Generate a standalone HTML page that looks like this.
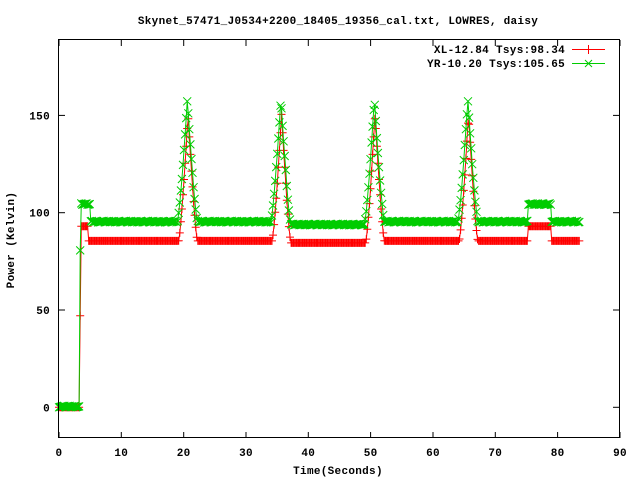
<!DOCTYPE html>
<html><head><meta charset="utf-8"><style>
html,body{margin:0;padding:0;background:#fff;}
svg{display:block;}
text{font-family:"Liberation Mono",monospace;font-weight:bold;font-size:11px;fill:#000;letter-spacing:0.3px;}
</style></head><body>
<svg id="s" width="640" height="480" xmlns="http://www.w3.org/2000/svg">
<text x="338" y="24" text-anchor="middle">Skynet_57471_J0534+2200_18405_19356_cal.txt, LOWRES, daisy</text>
<text x="338" y="474" text-anchor="middle">Time(Seconds)</text>
<text transform="translate(14,240) rotate(-90)" text-anchor="middle">Power (Kelvin)</text>
<g id="ax"></g>
<g id="data"></g>
<rect x="58.5" y="39.5" width="561" height="398" fill="none" stroke="#000" stroke-width="1"/>
<text x="565" y="53" text-anchor="end">XL-12.84 Tsys:98.34</text>
<text x="565" y="67" text-anchor="end">YR-10.20 Tsys:105.65</text>
<line x1="572" y1="49.5" x2="605" y2="49.5" stroke="#f00"/>
<line x1="588.5" y1="45" x2="588.5" y2="54" stroke="#f00"/>
<line x1="572" y1="63.5" x2="605" y2="63.5" stroke="#0c0"/>
<path d="M585 60 l7 7 M585 67 l7 -7" stroke="#0c0"/>
</svg>
<script>
function X(t){return 59+t*6.233;}
function Y(v){return 407.3-v*1.946;}
var ax=document.getElementById('ax'),h='';
[0,50,100,150].forEach(function(v){var y=Y(v).toFixed(1);
 h+='<line x1="59" y1="'+y+'" x2="65" y2="'+y+'" stroke="#000"/><line x1="613" y1="'+y+'" x2="619" y2="'+y+'" stroke="#000"/>';
 h+='<text x="50" y="'+(+y+4)+'" text-anchor="end">'+v+'</text>';});
for(var t=0;t<=90;t+=10){var x=X(t).toFixed(1);
 h+='<line x1="'+x+'" y1="438" x2="'+x+'" y2="432" stroke="#000"/><line x1="'+x+'" y1="40" x2="'+x+'" y2="46" stroke="#000"/>';
 h+='<text x="'+x+'" y="456" text-anchor="middle">'+t+'</text>';}
ax.innerHTML=h;
var peaks=[20.6,35.6,50.6,65.6];
function bump(t,p,a,w){var d=Math.abs(t-p)/w;if(d>=1)return 0;return a*Math.pow(1-d,1.3);}
function red(t){if(t<3.3)return 0;if(t<3.5)return 47;var b;
 if(t<4.7)b=93;else if(t>=75.2&&t<79)b=93;else if(t>36.5&&t<50)b=84.5;else b=85.5;
 peaks.forEach(function(p){b+=bump(t,p+0.1,65,1.5);});return b;}
function grn(t){if(t<3.3)return 0;if(t<3.5)return 80;var b;
 if(t<5)b=104;else if(t>=75.2&&t<79)b=104;else if(t>36.5&&t<50)b=93.5;else b=95;
 peaks.forEach(function(p){b+=bump(t,p,63,1.6);});return b;}
var pr='',pg='',mr='',mg='';
for(var t=0;t<=83.5;t+=0.17){var x=X(t),yr=Y(red(t)),yg=Y(grn(t)+((t*7)%1)*0.8);
 pr+=(pr?'L':'M')+x.toFixed(1)+' '+yr.toFixed(1);
 pg+=(pg?'L':'M')+x.toFixed(1)+' '+yg.toFixed(1);
 mr+='M'+(x-4).toFixed(1)+' '+yr.toFixed(1)+'h8M'+x.toFixed(1)+' '+(yr-4).toFixed(1)+'v8';
 mg+='M'+(x-4).toFixed(1)+' '+(yg-4).toFixed(1)+'l8 8M'+(x-4).toFixed(1)+' '+(yg+4).toFixed(1)+'l8 -8';}
document.getElementById('data').innerHTML=
 '<path d="'+pr+'" fill="none" stroke="#f00"/><path d="'+mr+'" fill="none" stroke="#f00"/>'+
 '<path d="'+pg+'" fill="none" stroke="#0c0"/><path d="'+mg+'" fill="none" stroke="#0c0"/>';
</script>
</body></html>
